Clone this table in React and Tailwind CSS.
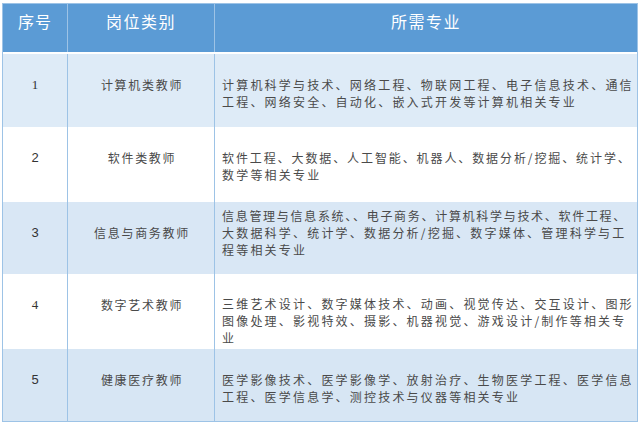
import React from 'react';

const rows = [
  {
    no: '1',
    serif: true,
    name: '计算机类教师',
    lines: ['计算机科学与技术、网络工程、物联网工程、电子信息技术、通信', '工程、网络安全、自动化、嵌入式开发等计算机相关专业'],
    bg: 'bg-[#deebf7]',
    h: 'h-[73px]',
    pt: 'pt-[22px]',
  },
  {
    no: '2',
    name: '软件类教师',
    lines: ['软件工程、大数据、人工智能、机器人、数据分析/挖掘、统计学、', '数学等相关专业'],
    tight: 'tracking-[1.9px]',
    bg: 'bg-white',
    h: 'h-[75px]',
    pt: 'pt-[22px]',
  },
  {
    no: '3',
    name: '信息与商务教师',
    lines: ['信息管理与信息系统、、电子商务、计算机科学与技术、软件工程、', '大数据科学、统计学、数据分析/挖掘、数字媒体、管理科学与工', '程等相关专业'],
    tight: 'tracking-[1.7px]',
    bg: 'bg-[#d9e7f5]',
    h: 'h-[72px]',
    pt: 'pt-[5px]',
  },
  {
    no: '4',
    serif: true,
    name: '数字艺术教师',
    lines: ['三维艺术设计、数字媒体技术、动画、视觉传达、交互设计、图形', '图像处理、影视特效、摄影、机器视觉、游戏设计/制作等相关专', '业'],
    bg: 'bg-white',
    h: 'h-[75px]',
    pt: 'pt-[21px]',
  },
  {
    no: '5',
    name: '健康医疗教师',
    lines: ['医学影像技术、医学影像学、放射治疗、生物医学工程、医学信息', '工程、医学信息学、测控技术与仪器等相关专业'],
    bg: 'bg-[#d7e6f4]',
    h: 'h-[72px]',
    pt: 'pt-[22px]',
  },
];

const cjk = { fontFamily: '"Noto Sans CJK SC", sans-serif' };

export default function App() {
  return (
    <div className="w-[640px] h-[425px] bg-white pt-[3px] pl-[2px]">
      <div className="w-[636px] border border-[#9dc3e6]" style={cjk}>
        {/* header */}
        <div className="grid grid-cols-[65px_147px_1fr] h-[50px] bg-[#5b9bd5] border-b-2 border-white text-white text-[16px]">
          <div className="border-r border-[#9dc3e6] flex justify-center pt-[5px] tracking-[1px]">序号</div>
          <div className="border-r border-[#9dc3e6] flex justify-center pt-[5px] tracking-[1.5px]">岗位类别</div>
          <div className="flex justify-center pt-[5px] tracking-[1.5px]">所需专业</div>
        </div>

        {rows.map((r) => (
          <div key={r.no} className={`grid grid-cols-[65px_147px_1fr] ${r.h} ${r.bg} text-[12px] leading-[17px] text-[#4a4a4a]`}>
            <div
              className="border-r border-[#9dc3e6] text-center pt-[22px] text-[13px] text-[#333]"
              style={{ fontFamily: r.serif ? '"Liberation Serif", serif' : '"Liberation Sans", sans-serif' }}
            >
              {r.no}
            </div>
            <div className="border-r border-[#9dc3e6] text-center pt-[22px] tracking-[1.7px] pl-[2px]">{r.name}</div>
            <div className={`pl-[7px] ${r.pt} whitespace-nowrap overflow-hidden`}>
              {r.lines.map((l, i) => (
                <div key={i} className={r.tight && i === 0 ? r.tight : 'tracking-[2.2px]'}>
                  {l}
                </div>
              ))}
            </div>
          </div>
        ))}
      </div>
    </div>
  );
}
